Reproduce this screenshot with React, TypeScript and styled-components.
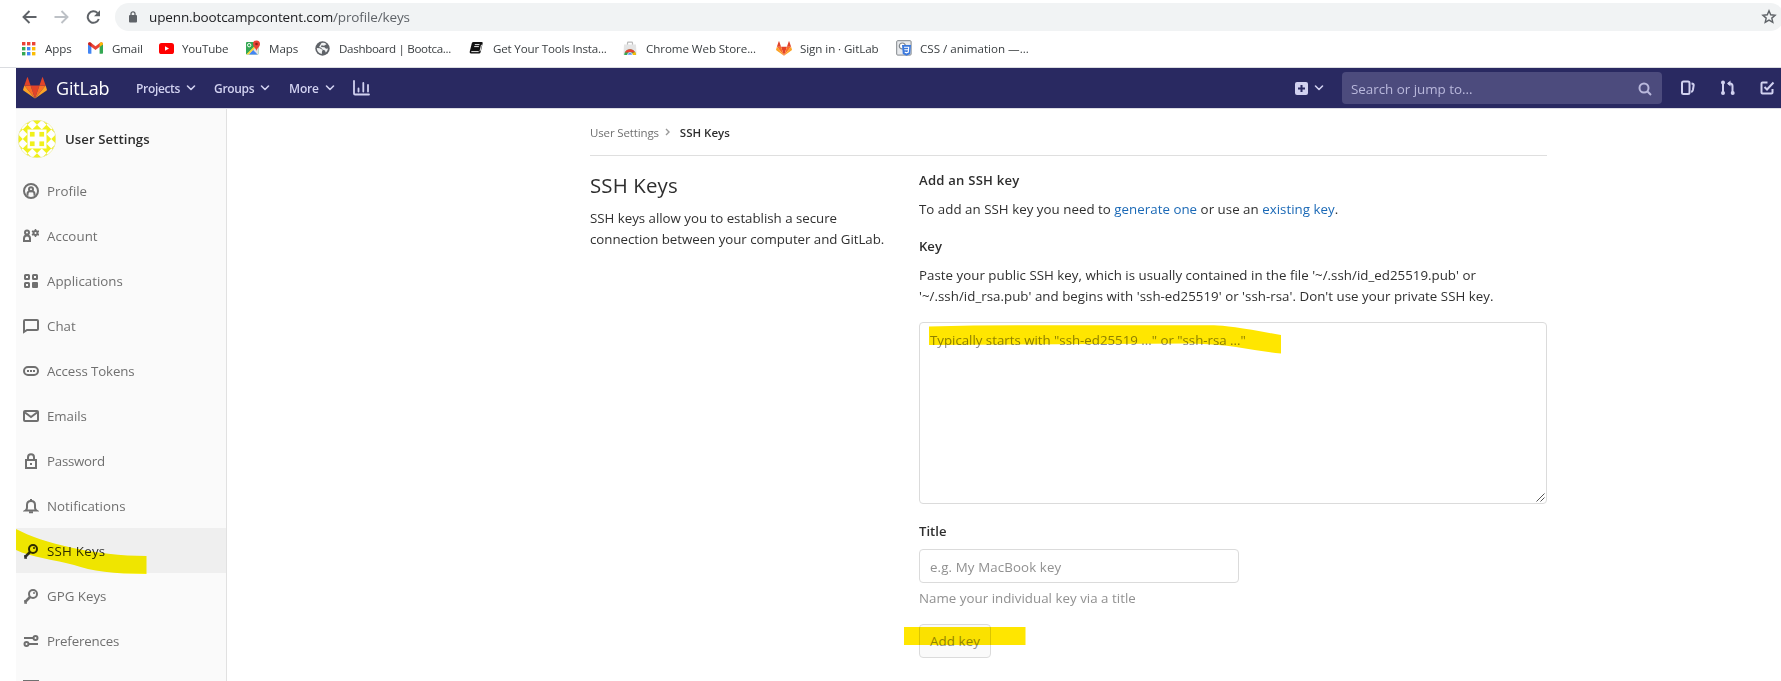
import React from 'react';
import styled, { createGlobalStyle } from 'styled-components';

const Global = createGlobalStyle`
  * { box-sizing: border-box; }
  html, body { margin: 0; background: #fff; overflow: hidden; }
  body { font-family: "Open Sans", "Noto Sans", sans-serif; color: #303030; font-size: 13.3px; }
  p, h1, h2 { margin: 0; font-weight: 400; }
`;

const Page = styled.div`width: 1781px; height: 681px; overflow: hidden; display: flex; flex-direction: column;`;

/* browser chrome */
const AddressRow = styled.div`height: 34px; flex: none; padding: 3px 0 3px 22px; display: flex; align-items: center;`;
const NavIcon = styled.svg<{ $gap: number }>`flex: none; display: block; margin-right: ${p => p.$gap}px;`;
const AddressBar = styled.div`
  width: 1669px; height: 28px; flex: none; border-radius: 14px; background: #f1f3f4;
  display: flex; align-items: center; padding: 0 7px 0 14px;
`;
const Url = styled.span`
  flex: 1; margin-left: 12px; color: #202124; font-size: 13.5px; letter-spacing: -0.13px; line-height: 20px;
  span { color: #5f6368; }
`;
const Bookmarks = styled.div`height: 34px; flex: none; display: flex; align-items: flex-start; padding: 5px 0 0 21px; border-bottom: 1px solid #dadce0;`;
const Bookmark = styled.div<{ $w: number; $gap: number; $ls: number }>`
  flex: none; width: ${p => p.$w}px; height: 18px; display: flex; align-items: center; gap: ${p => p.$gap}px;
  font-size: 11.6px; letter-spacing: ${p => p.$ls}px; color: #3c4043; white-space: nowrap;
  svg { flex: none; display: block; }
`;

/* header */
const Header = styled.header`
  height: 41px; flex: none; margin-left: 16px; background: #292961; border-bottom: 1px solid #dcdce4;
  display: flex; align-items: center; padding-left: 7px; color: #d1d1f0;
  svg { flex: none; display: block; }
`;
const Brand = styled.span`width: 80px; margin-left: 9px; color: #fff; font-size: 18px; letter-spacing: -0.2px; line-height: 24px;`;
const MenuItem = styled.span<{ $w: number; $ls?: number }>`
  width: ${p => p.$w}px; display: flex; align-items: center; gap: 6px; font-size: 12px; font-weight: 600;
  letter-spacing: ${p => p.$ls ?? 0}px; white-space: nowrap;
`;
const Spacer = styled.div`flex: 1;`;
const HeaderRight = styled.div`display: flex; align-items: center; flex: none; width: 486px;`;
const PlusChevron = styled.span`margin-left: 6px; flex: none;`;
const HeaderIcon = styled.span`width: 39.5px; flex: none;`;
const SearchBox = styled.div`
  width: 320px; height: 32px; flex: none; margin: 0 18px; border-radius: 4px; background: #4c4b7d; color: #b9b8dc;
  display: flex; align-items: center; justify-content: space-between; padding: 2px 10px 0 9px; font-size: 13.4px;
  letter-spacing: -0.02px;
`;

/* body */
const Body = styled.div`flex: 1; min-height: 0; display: flex; margin-left: 16px;`;
const Sidebar = styled.aside`width: 211px; flex: none; background: #fafafa; border-right: 1px solid #e1e1e1; overflow: hidden; position: relative;`;
const SideHead = styled.div`
  height: 59px; display: flex; align-items: center; gap: 9px; padding-left: 2px; font-weight: 600; font-size: 13.2px;
  letter-spacing: 0.05px; color: #2e2e2e;
`;
const SideItem = styled.div<{ $active?: boolean; $ls: number }>`
  height: 45px; display: flex; align-items: center; gap: 8px; padding: 0 0 0 7px; white-space: nowrap;
  color: ${p => (p.$active ? '#2e2e2e' : '#707070')}; background: ${p => (p.$active ? '#efefef' : 'transparent')};
  letter-spacing: ${p => p.$ls}px;
  svg { flex: none; display: block; }
`;
const Marker = styled.svg<{ $x: number; $y: number }>`
  position: absolute; left: ${p => p.$x}px; top: ${p => p.$y}px; mix-blend-mode: multiply; pointer-events: none; display: block;
`;
const Main = styled.main`flex: none; width: 957px; margin-left: 363px;`;
const Crumbs = styled.nav`
  height: 47px; display: flex; align-items: center; font-size: 11.5px; letter-spacing: -0.14px; color: #707070; border-bottom: 1px solid #dfdfdf;
  strong { font-weight: 600; color: #2e2e2e; letter-spacing: 0; }
  svg { margin: 0 9px 0 6px; }
`;
const Columns = styled.div`display: flex;`;
const Intro = styled.section`width: 329px; flex: none;`;
const Title = styled.h1`font-size: 20.4px; line-height: 24px; margin-top: 17px; font-weight: 500; color: #2e2e2e; letter-spacing: 0.15px;`;
const Line = styled.p<{ $ls?: number }>`line-height: 21px; white-space: nowrap; letter-spacing: ${p => p.$ls ?? 0}px;`;
const IntroText = styled.div`margin-top: 11px;`;
const Form = styled.section`width: 628px;`;
const Label = styled.h2<{ $mt: number; $ls?: number }>`
  font-size: 13.1px; line-height: 21px; font-weight: 600; color: #2e2e2e; margin-top: ${p => p.$mt}px; letter-spacing: ${p => p.$ls ?? 0}px;
`;
const Link = styled.a`color: #1b69b6;`;
const Gap = styled.div<{ $h: number }>`height: ${p => p.$h}px;`;
const KeyArea = styled.div`
  height: 182px; border: 1px solid #dbdbdb; border-radius: 4px; position: relative; padding: 7px 10px; color: #8d8d8d;
`;
const Grip = styled.svg`position: absolute; right: 1px; bottom: 1px;`;
const TitleInput = styled.div`
  width: 320px; height: 34px; border: 1px solid #dbdbdb; border-radius: 4px; padding: 7px 10px 0; color: #919191; margin-top: 7px;
`;
const Help = styled.div`color: #919191; margin-top: 5px;`;
const ButtonWrap = styled.div`position: relative; margin-top: 15px; height: 34px;`;
const AddButton = styled.button`
  width: 72px; height: 34px; padding: 0; border: 1px solid #dbdbdb; border-radius: 4px; background: #fafafa;
  color: #919191; font: inherit; letter-spacing: 0.1px; display: block;
`;

const Chevron = () => (
  <svg width="10" height="8" viewBox="0 0 10 8" fill="none" stroke="currentColor" strokeWidth="1.6" strokeLinecap="round" strokeLinejoin="round"><path d="M1.5 2L5 5.5 8.5 2" /></svg>
);
const Tanuki = ({ w, h }: { w: number; h: number }) => (
  <svg width={w} height={h} viewBox="0 0 25 24" preserveAspectRatio="none">
    <path d="M12.5 23.5L17.1 9.3H7.9z" fill="#e24329" />
    <path d="M12.5 23.5L7.9 9.3H1.4z" fill="#fc6d26" />
    <path d="M1.4 9.3L.1 13.6c-.1.4 0 .8.3 1l12.1 8.9z" fill="#fca326" />
    <path d="M1.4 9.3h6.5L5.1.7c-.1-.4-.7-.4-.9 0z" fill="#e24329" />
    <path d="M12.5 23.5L17.1 9.3h6.5z" fill="#fc6d26" />
    <path d="M23.6 9.3l1.3 4.3c.1.4 0 .8-.3 1l-12.1 8.9z" fill="#fca326" />
    <path d="M23.6 9.3h-6.5L19.9.7c.1-.4.7-.4.9 0z" fill="#e24329" />
  </svg>
);

const AppsIcon = () => {
  const c = ['#ea4335', '#ea4335', '#ea4335', '#34a853', '#4285f4', '#fbbc04', '#34a853', '#4285f4', '#fbbc04'];
  return <svg width="15" height="15">{c.map((f, i) => <rect key={i} x={1 + (i % 3) * 5} y={1 + Math.floor(i / 3) * 5} width="3.4" height="3.4" fill={f} />)}</svg>;
};
const GmailIcon = () => (
  <svg width="15" height="12" viewBox="0 0 15 12">
    <path d="M0 2v9q0 .8.8.8h2.6V4.5z" fill="#4285f4" />
    <path d="M11.6 4.5v7.3h2.6q.8 0 .8-.8V2z" fill="#34a853" />
    <path d="M0 2.2Q0 .3 1.7.3q.7 0 1.2.4l4.6 3.5L12.1.7q.5-.4 1.2-.4Q15 .3 15 2.2L7.5 8z" fill="#ea4335" />
    <path d="M0 2.2Q0 .3 1.7.3q.7 0 1.7.8v4z" fill="#c5221f" /><path d="M15 2.2Q15 .3 13.3.3q-.7 0-1.7.8v4z" fill="#fbbc04" />
  </svg>
);
const YoutubeIcon = () => <svg width="15" height="11"><rect width="15" height="11" rx="2.6" fill="#f00" /><path d="M6 3.2v4.6l4-2.3z" fill="#fff" /></svg>;
const MapsIcon = () => (
  <svg width="16" height="16" viewBox="0 0 16 16">
    <rect x="1" y="2" width="12.5" height="12.5" rx="1" fill="#34a853" />
    <path d="M1.5 14.5L13.5 3v11.5z" fill="#e4e4e0" /><path d="M4 14.5L8 9.8l4.5 4.7z" fill="#4285f4" />
    <path d="M1.5 14.2L12.5 3l1 1.4L3.6 14.5z" fill="#fdd835" /><circle cx="4.2" cy="5.2" r="1.7" fill="none" stroke="#fff" />
    <path d="M11.5 11C11 8 8 7 8 4a3.5 3.5 0 017 0c0 3-3 4-3.5 7z" fill="#ea4335" /><circle cx="11.5" cy="4" r="1.3" fill="#8c2018" />
  </svg>
);
const GlobeIcon = () => (
  <svg width="15" height="15" viewBox="0 0 15 15"><circle cx="7.5" cy="7.5" r="7.2" fill="#5f6368" />
    <path d="M1.8 7l3 .3 2.500 1.400q.7.800-.3 1.800l-.2 2.500C3.800 12.500 1.800 10 1.800 7zM6.500 2q3-.8 5 1.200L9 4.800 6.500 4.300 6 6l3.500.3 1.500 1.500 2-.3c-.2 1.500-1 3-2.300 4l-.7-2-2.500-1L6 6.800 4 6z" fill="#f1f3f4" /></svg>
);
const BookIcon = () => (
  <svg width="15" height="14" viewBox="0 0 15 14"><path d="M4.500 1h8q1.500 0 1.200 1.300l-2 8.700q-.4 1.500-1.700 1.500H2q-1.700 0-1.300-1.700L2.800 2.300Q3.200 1 4.500 1z" fill="#111" />
    <path d="M5.800 3.600h4.700M5.200 5.600h4.700M2.300 10.600h7.400M12.500 3.800l-1.500 6.500" stroke="#fff" strokeWidth=".9" fill="none" /></svg>
);
const StoreIcon = () => (
  <svg width="14" height="15" viewBox="0 0 14 15"><path d="M4.500 4V2q0-.8.800-.8h3.400q.8 0 .8.800v2" fill="none" stroke="#bbb" strokeWidth="1.200" /><path d="M1 3.500h12l.6 10.500H.4z" fill="#e4e4e4" />
    <path d="M1.200 14a5.800 5.800 0 0111.600 0z" fill="#34a853" /><path d="M1.800 11.500a5.700 5.700 0 0110.400 0z" fill="#ea4335" /><path d="M7 14l5.200-3.300q.7 1.300.6 3.300z" fill="#fbbc04" /><path d="M4.500 14a2.500 2.500 0 015 0z" fill="#4285f4" stroke="#fff" strokeWidth=".7" /></svg>
);
const CssIcon = () => (
  <svg width="16" height="16" viewBox="0 0 16 16"><rect x=".7" y=".7" width="14.4" height="14.4" rx="1" fill="#e8eaed" stroke="#80868b" strokeWidth="1" />
    <circle cx="6.3" cy="6" r="3" fill="#fff" stroke="#80868b" strokeWidth="1.2" /><path d="M6 5h9l-.8 9-3.700 1.800L6.800 14z" fill="#3b78dc" /><path d="M8 7.300h4.700l-.4 4.700-1.900.8-1.700-.8M8.300 9.700h4" fill="none" stroke="#fff" strokeWidth="1.100" /></svg>
);

const bookmarks: [string, React.ReactNode, number, number, number][] = [
  ['Apps', <AppsIcon />, 67, 9, -0.1],
  ['Gmail', <GmailIcon />, 71, 9, -0.15],
  ['YouTube', <YoutubeIcon />, 86, 8, -0.2],
  ['Maps', <MapsIcon />, 70, 8, -0.05],
  ['Dashboard | Bootca...', <GlobeIcon />, 154, 9, -0.33],
  ['Get Your Tools Insta...', <BookIcon />, 154, 9, -0.18],
  ['Chrome Web Store...', <StoreIcon />, 153, 9, -0.08],
  ['Sign in · GitLab', <Tanuki w={16} h={15} />, 120, 8, -0.08],
  ['CSS / animation —...', <CssIcon />, 130, 8, 0],
];

const stroke = { fill: 'none', stroke: 'currentColor', strokeWidth: 2 } as const;
const Key = () => (
  <svg width="16" height="16" viewBox="0 0 16 16"><circle cx="10" cy="6" r="4" {...stroke} /><path d="M7 9l-5 5.2" {...stroke} strokeWidth="2.600" /><path d="M2 12v3h2" {...stroke} strokeWidth="1.500" /><circle cx="11" cy="5" r="1" fill="currentColor" /></svg>
);
const icons: Record<string, React.ReactNode> = {
  Profile: <><circle cx="8" cy="8" r="7" {...stroke} /><circle cx="8" cy="6.3" r="2" {...stroke} /><path d="M4.500 12.800V11q0-2.500 2.200-2.800h2.600q2.200.300 2.200 2.800v1.800" {...stroke} /></>,
  Account: <><circle cx="4" cy="4.5" r="2" {...stroke} /><path d="M1 13V10.500Q1 7.500 4 7.500t3 3V13z" {...stroke} /><circle cx="12.5" cy="5" r="2" {...stroke} /><path d="M12.500 1v2M12.500 7v2M9 3l1.700 1M14.300 6l1.700 1M9 7l1.700-1M14.300 4L16 3" {...stroke} strokeWidth="1.500" /></>,
  Applications: <><rect x="2" y="2" width="4" height="4" rx=".5" {...stroke} /><rect x="10" y="2" width="4" height="4" rx=".5" {...stroke} /><rect x="2" y="10" width="4" height="4" rx=".5" {...stroke} /><rect x="9" y="9" width="6" height="6" rx="1" fill="currentColor" /></>,
  Chat: <path d="M1 14V3q0-1 1-1h12q1 0 1 1v8q0 1-1 1H4z" {...stroke} />,
  'Access Tokens': <><rect x="1" y="4" width="14" height="8" rx="4" {...stroke} /><path d="M4 8h2M7 8h2M10 8h2" {...stroke} /></>,
  Emails: <><rect x="1" y="3" width="14" height="10" rx="1" {...stroke} /><path d="M2 4.500L8 9l6-4.500" {...stroke} /></>,
  Password: <><rect x="3" y="7" width="10" height="8" {...stroke} /><path d="M5 7V4.200a3 3 0 016 0V7" {...stroke} /><rect x="7" y="10" width="2" height="2" fill="currentColor" /></>,
  Notifications: <><path d="M2.500 12.500q1.500-1 1.500-3V7q0-4 4-4t4 4v2.500q0 2 1.500 3z" {...stroke} /><path d="M8 1v2M6 14.200h4" {...stroke} /></>,
  Preferences: <><path d="M1 5h9M6 11h9" {...stroke} /><circle cx="12.5" cy="5" r="2" {...stroke} /><circle cx="3.5" cy="11" r="2" {...stroke} /></>,
};
const items: [string, number][] = [
  ['Profile', 0], ['Account', 0.07], ['Applications', 0], ['Chat', 0], ['Access Tokens', -0.11], ['Emails', -0.05],
  ['Password', -0.25], ['Notifications', 0.02], ['SSH Keys', 0.25], ['GPG Keys', 0], ['Preferences', -0.18],
];

const cells = [0, 1, 2, 3].flatMap(r => [0, 1, 2, 3].map(c => ({ x: c * 9.5, y: r * 9.5, inner: r % 3 > 0 && c % 3 > 0 })));
const Avatar = () => (
  <svg width="38" height="38" viewBox="0 0 38 38">
    <defs><clipPath id="av"><circle cx="19" cy="19" r="19" /></clipPath></defs>
    <g clipPath="url(#av)"><rect width="38" height="38" fill="#f0f01c" />
      {cells.map(({ x, y, inner }) => inner
        ? <g key={`${x}-${y}`}><rect x={x} y={y} width="9.5" height="9.5" fill="#fff" /><rect x={x + 2.4} y={y + 2.4} width="4.7" height="4.7" fill="#f0f01c" /></g>
        : <path key={`${x}-${y}`} transform={`translate(${x} ${y})`} d="M4.750 0L9.500 4.750 4.750 9.500 0 4.750z" fill="#fff" />)}
    </g>
    <circle cx="19" cy="19" r="18.7" fill="none" stroke="#e8e8d0" strokeWidth=".6" />
  </svg>
);

export default function App() {
  return (
    <Page>
      <Global />
      <AddressRow>
        <NavIcon $gap={17} width="15" height="14" viewBox="0 0 15 14" fill="none" stroke="#5f6368" strokeWidth="1.9"><path d="M14.500 7H1.500M7.500 1L1.500 7l6 6" /></NavIcon>
        <NavIcon $gap={17} width="15" height="14" viewBox="0 0 15 14" fill="none" stroke="#bdc1c6" strokeWidth="1.9"><path d="M.5 7h13M7.500 1l6 6-6 6" /></NavIcon>
        <NavIcon $gap={14} width="15" height="14" viewBox="0 0 15 14"><path d="M12.800 9A5.700 5.700 0 1111.500 3" fill="none" stroke="#5f6368" strokeWidth="2" /><path d="M14 .2v6H8z" fill="#5f6368" /></NavIcon>
        <AddressBar>
          <svg width="8" height="12" viewBox="0 0 8 12"><rect y="4" width="8" height="7.5" rx="1" fill="#5f6368" /><path d="M2 4.500V2.800a2 2 0 014 0v1.700" fill="none" stroke="#5f6368" strokeWidth="1.300" /></svg>
          <Url>upenn.bootcampcontent.com<span>/profile/keys</span></Url>
          <svg width="16" height="16" viewBox="0 0 16 16" fill="none" stroke="#5f6368" strokeWidth="1.400"><path d="M8 1.800l1.700 4 4.400.4-3.300 2.900 1 4.300L8 11.100l-3.800 2.300 1-4.300-3.300-2.900 4.400-.4z" /></svg>
        </AddressBar>
      </AddressRow>
      <Bookmarks>
        {bookmarks.map(([t, icon, w, gap, ls]) => <Bookmark key={t} $w={w} $gap={gap} $ls={ls}>{icon}<span>{t}</span></Bookmark>)}
      </Bookmarks>
      <Header>
        <Tanuki w={24} h={22} />
        <Brand>GitLab</Brand>
        <MenuItem $w={78} $ls={-0.33}>Projects<Chevron /></MenuItem>
        <MenuItem $w={75} $ls={-0.33}>Groups<Chevron /></MenuItem>
        <MenuItem $w={64} $ls={-0.15}>More<Chevron /></MenuItem>
        <svg width="17" height="16" viewBox="0 0 17 16" fill="none" stroke="currentColor" strokeWidth="1.800" strokeLinecap="round"><path d="M1 1v12.500q0 1 1 1h14M5.500 8.500v3M10.300 3v8.500M15 5v6.500" /></svg>
        <Spacer />
        <HeaderRight>
          <svg width="13" height="13" viewBox="0 0 13 13"><rect width="13" height="13" rx="2" fill="currentColor" /><path d="M6.500 3v7M3 6.500h7" stroke="#292961" strokeWidth="2" /></svg>
          <PlusChevron><Chevron /></PlusChevron>
          <SearchBox>Search or jump to...
            <svg width="14" height="14" viewBox="0 0 14 14" fill="none" stroke="currentColor" strokeWidth="2"><circle cx="6" cy="6" r="4.5" /><path d="M9.300 9.300L13 13" /></svg>
          </SearchBox>
          <HeaderIcon><svg width="16" height="16" viewBox="0 0 16 16" {...stroke}><rect x="2" y="1.5" width="7.500" height="12.500" rx="1.500" /><path d="M11.500 3.500q2.200.2 2.200 1.700L12.900 10q-.4 1.700-1.700 2" /></svg></HeaderIcon>
          <HeaderIcon><svg width="16" height="16" viewBox="0 0 16 16" {...stroke}><path d="M3 3v10M8 3.500h2q2.500 0 2.500 2.500v7" /><path d="M10.500.5L7 3.500l3.500 3z" fill="currentColor" stroke="none" /><circle cx="3" cy="2.5" r="1" /><circle cx="3" cy="13" r="1" /><circle cx="12.7" cy="13" r="1" /></svg></HeaderIcon>
          <HeaderIcon><svg width="16" height="16" viewBox="0 0 16 16" {...stroke}><path d="M8.500 2.500H3.500q-1 0-1 1v9q0 1 1 1h9q1 0 1-1V9" /><path d="M5.500 7l2.500 2.500L14.500 2.500" /></svg></HeaderIcon>
        </HeaderRight>
      </Header>
      <Body>
        <Sidebar>
          <SideHead><Avatar />User Settings</SideHead>
          {items.map(([t, ls]) => (
            <SideItem key={t} $ls={ls} $active={t === 'SSH Keys'}>
              {t.endsWith('Keys') ? <Key /> : <svg width="16" height="16" viewBox="0 0 16 16">{icons[t]}</svg>}
              <span>{t}</span>
            </SideItem>
          ))}
          <SideItem $ls={0}><svg width="16" height="16" viewBox="0 0 16 16"><rect x="1" y="3" width="14" height="10" {...stroke} /></svg></SideItem>
          <Marker $x={0} $y={420} width="132" height="46" viewBox="0 0 132 46"><path d="M0 0C26 14 80 27 130.500 27V45C98 45 75 42 58 36C40 31 14 28 0 21z" fill="#fff500" /></Marker>
        </Sidebar>
        <Main>
          <Crumbs>User Settings<svg width="6" height="8" viewBox="0 0 6 8" fill="none" stroke="#999" strokeWidth="1.400"><path d="M1 1l3 3-3 3" /></svg><strong>SSH Keys</strong></Crumbs>
          <Columns>
            <Intro>
              <Title>SSH Keys</Title>
              <IntroText>
                <Line $ls={-0.02}>SSH keys allow you to establish a secure</Line>
                <Line $ls={-0.04}>connection between your computer and GitLab.</Line>
              </IntroText>
            </Intro>
            <Form>
              <Label $mt={14} $ls={0.22}>Add an SSH key</Label>
              <Gap $h={8} />
              <Line $ls={0.03}>To add an SSH key you need to <Link>generate one</Link> or use an <Link>existing key</Link>.</Line>
              <Label $mt={16}>Key</Label>
              <Gap $h={8} />
              <Line $ls={0.02}>Paste your public SSH key, which is usually contained in the file '~/.ssh/id_ed25519.pub' or</Line>
              <Line $ls={0.03}>'~/.ssh/id_rsa.pub' and begins with 'ssh-ed25519' or 'ssh-rsa'. Don't use your private SSH key.</Line>
              <Gap $h={15} />
              <KeyArea>
                <Line $ls={-0.02}>Typically starts with "ssh-ed25519 ..." or "ssh-rsa ..."</Line>
                <Marker $x={9} $y={2} width="354" height="30" viewBox="0 0 354 30"><path d="M0 1.500Q45 .3 90 .3H285Q300 .5 352 10V28.500Q330 26 307 22Q290 19 260 18.500L0 20z" fill="#ffe600" /></Marker>
                <Grip width="9" height="9" stroke="#555" strokeWidth="1"><path d="M.5 8.500l8-8M4.500 8.500l4-4" /></Grip>
              </KeyArea>
              <Label $mt={17}>Title</Label>
              <TitleInput><Line $ls={0.12}>e.g. My MacBook key</Line></TitleInput>
              <Help><Line $ls={0.03}>Name your individual key via a title</Line></Help>
              <ButtonWrap>
                <AddButton>Add key</AddButton>
                <Marker $x={-15} $y={3} width="122" height="18"><rect width="121.5" height="18" fill="#ffe600" /></Marker>
              </ButtonWrap>
            </Form>
          </Columns>
        </Main>
      </Body>
    </Page>
  );
}
